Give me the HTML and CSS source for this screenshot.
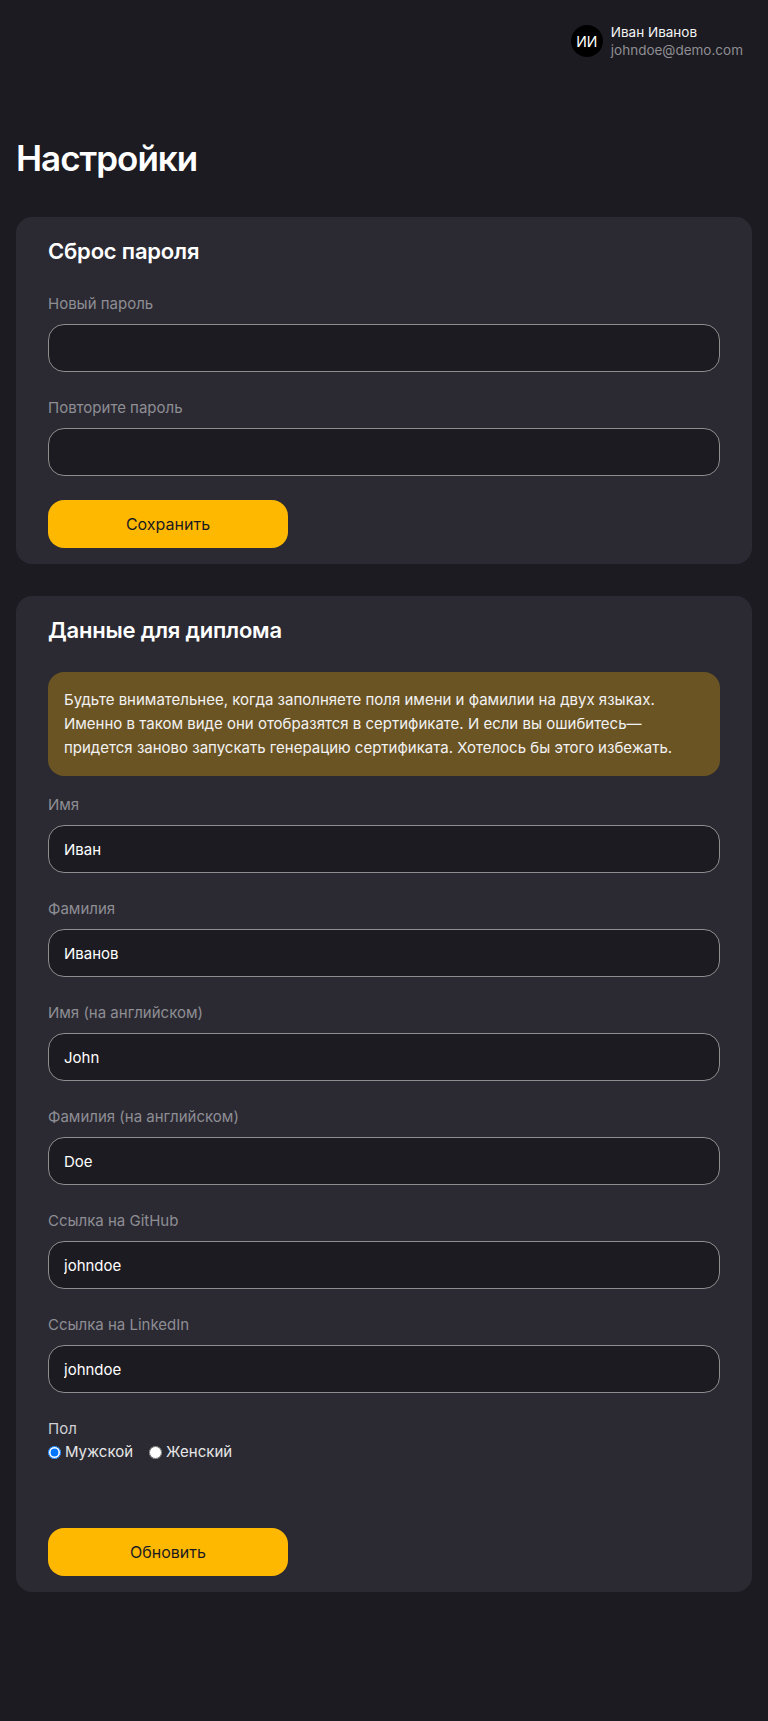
FILE: index.html
```html
<!DOCTYPE html>
<html lang="ru">
<head>
<meta charset="utf-8">
<title>Настройки</title>
<link rel="stylesheet" href="styles.css">
</head>
<body>
<header class="topbar">
  <div class="user">
    <div class="avatar">ИИ</div>
    <div class="user-info">
      <div class="user-name">Иван Иванов</div>
      <div class="user-email">johndoe@demo.com</div>
    </div>
  </div>
</header>
<main class="page">
  <h1 class="page-title">Настройки</h1>

  <section class="card">
    <h2 class="card-title card-title-first">Сброс пароля</h2>
    <div class="fields">
      <div class="field">
        <label class="field-label">Новый пароль</label>
        <input class="field-input" type="password">
      </div>
      <div class="field">
        <label class="field-label">Повторите пароль</label>
        <input class="field-input" type="password">
      </div>
    </div>
    <button class="btn" type="button">Сохранить</button>
  </section>

  <section class="card">
    <h2 class="card-title">Данные для диплома</h2>
    <div class="alert">Будьте внимательнее, когда заполняете поля имени и фамилии на двух языках. Именно в таком виде они отобразятся в сертификате. И если вы ошибитесь— придется заново запускать генерацию сертификата. Хотелось бы этого избежать.</div>
    <div class="fields">
      <div class="field">
        <label class="field-label">Имя</label>
        <input class="field-input" type="text" value="Иван">
      </div>
      <div class="field">
        <label class="field-label">Фамилия</label>
        <input class="field-input" type="text" value="Иванов">
      </div>
      <div class="field">
        <label class="field-label">Имя (на английском)</label>
        <input class="field-input" type="text" value="John">
      </div>
      <div class="field">
        <label class="field-label">Фамилия (на английском)</label>
        <input class="field-input" type="text" value="Doe">
      </div>
      <div class="field">
        <label class="field-label">Ссылка на GitHub</label>
        <input class="field-input" type="text" value="johndoe">
      </div>
      <div class="field">
        <label class="field-label">Ссылка на LinkedIn</label>
        <input class="field-input" type="text" value="johndoe">
      </div>
      <div class="field">
        <div class="gender-label">Пол</div>
        <div class="radios">
          <label class="radio"><input type="radio" name="gender" checked>Мужской</label>
          <label class="radio"><input type="radio" name="gender">Женский</label>
        </div>
      </div>
    </div>
    <button class="btn btn-update" type="button">Обновить</button>
  </section>
</main>
</body>
</html>
```

FILE: styles.css
```css
html {
  background: #1c1b21;
}
body {
  margin: 0;
  background: #1c1b21;
  color: #ffffff;
  font-family: Inter, "Noto Sans", sans-serif;
  min-height: 1721px;
}
.topbar {
  display: flex;
  justify-content: flex-end;
  padding: 23px 25px 0 0;
}
.user {
  display: flex;
  align-items: center;
  gap: 8px;
}
.avatar {
  width: 32px;
  height: 32px;
  border-radius: 50%;
  background: #000000;
  color: #ffffff;
  font-size: 14px;
  display: flex;
  align-items: center;
  justify-content: center;
}
.user-info {
  display: flex;
  flex-direction: column;
}
.user-name {
  font-size: 13.5px;
  line-height: 18px;
  color: #f4f4f4;
}
.user-email {
  font-size: 13.5px;
  line-height: 18px;
  color: #8e8e93;
}
.page {
  padding: 0 16px;
  display: flex;
  flex-direction: column;
}
.page-title {
  margin: 77px 0 37px;
  font-size: 35px;
  line-height: 44px;
  font-weight: 600;
  letter-spacing: -1px;
  color: #ffffff;
}
.card {
  background: #2b2a33;
  border-radius: 16px;
  padding: 20px 32px 16px;
  margin-bottom: 32px;
  display: flex;
  flex-direction: column;
  align-items: flex-start;
}
.card-title {
  margin: 0 0 28px;
  font-size: 22px;
  line-height: 28px;
  font-weight: 600;
  letter-spacing: -0.2px;
  color: #ffffff;
}
.card-title-first {
  margin-bottom: 29px;
}
.fields {
  display: flex;
  flex-direction: column;
  gap: 26px;
  align-self: stretch;
}
.field {
  display: flex;
  flex-direction: column;
}
.field-label {
  font-size: 15px;
  line-height: 20px;
  color: #8e8e93;
  margin-bottom: 10px;
}
.field-input {
  box-sizing: border-box;
  height: 48px;
  width: 100%;
  background: #1c1b21;
  border: 1px solid #8e8e8e;
  border-radius: 16px;
  padding: 0 15px;
  color: #ffffff;
  font-family: Inter, "Noto Sans", sans-serif;
  font-size: 15px;
  outline: none;
}
.alert {
  align-self: stretch;
  background: #6b5424;
  border-radius: 16px;
  padding: 16px;
  margin-bottom: 19px;
  font-size: 15px;
  line-height: 24px;
  color: #f2f2f2;
}
.gender-label {
  font-size: 15px;
  line-height: 20px;
  color: #d0d0d4;
  margin-bottom: 3px;
}
.radios {
  display: flex;
  gap: 16px;
  height: 20px;
  align-items: center;
}
.radio {
  display: flex;
  align-items: center;
  font-size: 15px;
  line-height: 20px;
  color: #e6e6e6;
}
.radio input {
  margin: 0 4px 0 0;
  width: 13px;
  height: 13px;
}
.btn {
  margin-top: 24px;
  width: 240px;
  height: 48px;
  border: none;
  border-radius: 16px;
  background: #ffb800;
  color: #1c1b21;
  font-family: Inter, "Noto Sans", sans-serif;
  font-size: 16px;
  cursor: pointer;
}
.btn-update {
  margin-top: 66px;
}
```
